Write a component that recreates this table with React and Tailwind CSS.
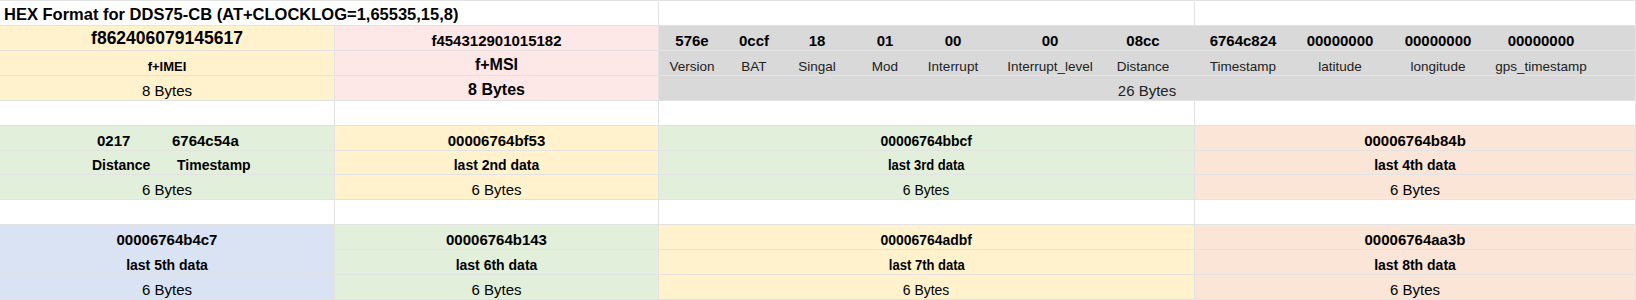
const line = "border-r border-b border-[#e3e3e3]";

const gray = [
  { v: "576e", l: "Version", w: "w-[66px]" },
  { v: "0ccf", l: "BAT", w: "w-[58px]" },
  { v: "18", l: "Singal", w: "w-[68px]" },
  { v: "01", l: "Mod", w: "w-[68px]" },
  { v: "00", l: "Interrupt", w: "w-[68px]" },
  { v: "00", l: "Interrupt_level", w: "w-[126px]" },
  { v: "08cc", l: "Distance", w: "w-[60px]" },
  { v: "6764c824", l: "Timestamp", w: "w-[140px]" },
  { v: "00000000", l: "latitude", w: "w-[54px]" },
  { v: "00000000", l: "longitude", w: "w-[142px]" },
  { v: "00000000", l: "gps_timestamp", w: "w-[64px]" },
];

function Cell({ bg = "bg-white", span = "", align = "justify-center", children }) {
  return (
    <div className={`${line} ${bg} ${span} flex items-end ${align} pb-[1px] whitespace-nowrap leading-[normal] min-w-0`}>
      {children}
    </div>
  );
}

// column C text is drawn a little narrower in the sheet
function Narrow({ children, className = "" }) {
  return <span className={`inline-block scale-x-[0.93] ${className}`}>{children}</span>;
}

export default function App() {
  const blank = (
    <>
      <Cell />
      <Cell />
      <Cell />
      <Cell />
    </>
  );

  return (
    <div
      className="w-[1636px] h-[300px] bg-white text-black border-t border-[#e3e3e3] overflow-hidden"
      style={{ fontFamily: '"Liberation Sans", Arial, sans-serif' }}
    >
      <div className="grid grid-cols-[335px_324px_536px_441px] grid-rows-[25px_25px_25px_25px_25px_25px_24px_25px_25px_25px_25px_25px]">
        {/* title row */}
        <Cell span="col-span-2" align="justify-start">
          <span className="pl-[4px] text-[16.5px] font-bold">HEX Format for DDS75-CB (AT+CLOCKLOG=1,65535,15,8)</span>
        </Cell>
        <Cell />
        <Cell />

        {/* row 1 */}
        <Cell bg="bg-[#fff2cc]">
          <span className="text-[17.5px] font-bold">f862406079145617</span>
        </Cell>
        <Cell bg="bg-[#fde8e7]">
          <span className="text-[15px] font-bold">f454312901015182</span>
        </Cell>
        <div className={`${line} bg-[#d9d9d9] col-span-2 flex items-end pb-[1px] leading-[normal] whitespace-nowrap`}>
          {gray.map((g, i) => (
            <span key={i} className={`${g.w} shrink-0 flex justify-center text-[15px] font-bold`}>
              {g.v}
            </span>
          ))}
        </div>

        {/* row 2 */}
        <Cell bg="bg-[#fff2cc]">
          <span className="text-[13px] font-bold">f+IMEI</span>
        </Cell>
        <Cell bg="bg-[#fde8e7]">
          <span className="text-[16px] font-bold">f+MSI</span>
        </Cell>
        <div className={`${line} bg-[#d9d9d9] col-span-2 flex items-end pb-[1px] leading-[normal] whitespace-nowrap`}>
          {gray.map((g, i) => (
            <span key={i} className={`${g.w} shrink-0 flex justify-center text-[13.5px] text-[#222]`}>
              {g.l}
            </span>
          ))}
        </div>

        {/* row 3 */}
        <Cell bg="bg-[#fff2cc]">
          <span className="text-[15px]">8 Bytes</span>
        </Cell>
        <Cell bg="bg-[#fde8e7]">
          <span className="text-[16px] font-bold">8 Bytes</span>
        </Cell>
        <Cell bg="bg-[#d9d9d9]" span="col-span-2">
          <span className="text-[15px] text-[#222]">26 Bytes</span>
        </Cell>

        {blank}

        {/* row 5 */}
        <Cell bg="bg-[#e2efda]" align="justify-start">
          <div className="pl-[97px] flex font-bold text-[15px]">
            <span className="w-[75px]">0217</span>
            <span>6764c54a</span>
          </div>
        </Cell>
        <Cell bg="bg-[#fff2cc]">
          <span className="text-[15px] font-bold">00006764bf53</span>
        </Cell>
        <Cell bg="bg-[#e2efda]">
          <Narrow className="text-[15px] font-bold">00006764bbcf</Narrow>
        </Cell>
        <Cell bg="bg-[#fbe5d6]">
          <span className="text-[15px] font-bold">00006764b84b</span>
        </Cell>

        {/* row 6 */}
        <Cell bg="bg-[#e2efda]" align="justify-start">
          <div className="pl-[92px] flex font-bold text-[14px]">
            <span className="w-[85px]">Distance</span>
            <span>Timestamp</span>
          </div>
        </Cell>
        <Cell bg="bg-[#fff2cc]">
          <span className="text-[14px] font-bold">last 2nd data</span>
        </Cell>
        <Cell bg="bg-[#e2efda]">
          <Narrow className="text-[14px] font-bold">last 3rd data</Narrow>
        </Cell>
        <Cell bg="bg-[#fbe5d6]">
          <span className="text-[14px] font-bold">last 4th data</span>
        </Cell>

        {/* row 7 */}
        <Cell bg="bg-[#e2efda]">
          <span className="text-[15px]">6 Bytes</span>
        </Cell>
        <Cell bg="bg-[#fff2cc]">
          <span className="text-[15px]">6 Bytes</span>
        </Cell>
        <Cell bg="bg-[#e2efda]">
          <Narrow className="text-[15px]">6 Bytes</Narrow>
        </Cell>
        <Cell bg="bg-[#fbe5d6]">
          <span className="text-[15px]">6 Bytes</span>
        </Cell>

        {blank}

        {/* row 9 */}
        <Cell bg="bg-[#dae3f3]">
          <span className="text-[15px] font-bold">00006764b4c7</span>
        </Cell>
        <Cell bg="bg-[#e2efda]">
          <span className="text-[15px] font-bold">00006764b143</span>
        </Cell>
        <Cell bg="bg-[#fff2cc]">
          <Narrow className="text-[15px] font-bold">00006764adbf</Narrow>
        </Cell>
        <Cell bg="bg-[#fbe5d6]">
          <span className="text-[15px] font-bold">00006764aa3b</span>
        </Cell>

        {/* row 10 */}
        <Cell bg="bg-[#dae3f3]">
          <span className="text-[14px] font-bold">last 5th data</span>
        </Cell>
        <Cell bg="bg-[#e2efda]">
          <span className="text-[14px] font-bold">last 6th data</span>
        </Cell>
        <Cell bg="bg-[#fff2cc]">
          <Narrow className="text-[14px] font-bold">last 7th data</Narrow>
        </Cell>
        <Cell bg="bg-[#fbe5d6]">
          <span className="text-[14px] font-bold">last 8th data</span>
        </Cell>

        {/* row 11 */}
        <Cell bg="bg-[#dae3f3]">
          <span className="text-[15px]">6 Bytes</span>
        </Cell>
        <Cell bg="bg-[#e2efda]">
          <span className="text-[15px]">6 Bytes</span>
        </Cell>
        <Cell bg="bg-[#fff2cc]">
          <Narrow className="text-[15px]">6 Bytes</Narrow>
        </Cell>
        <Cell bg="bg-[#fbe5d6]">
          <span className="text-[15px]">6 Bytes</span>
        </Cell>
      </div>
    </div>
  );
}
